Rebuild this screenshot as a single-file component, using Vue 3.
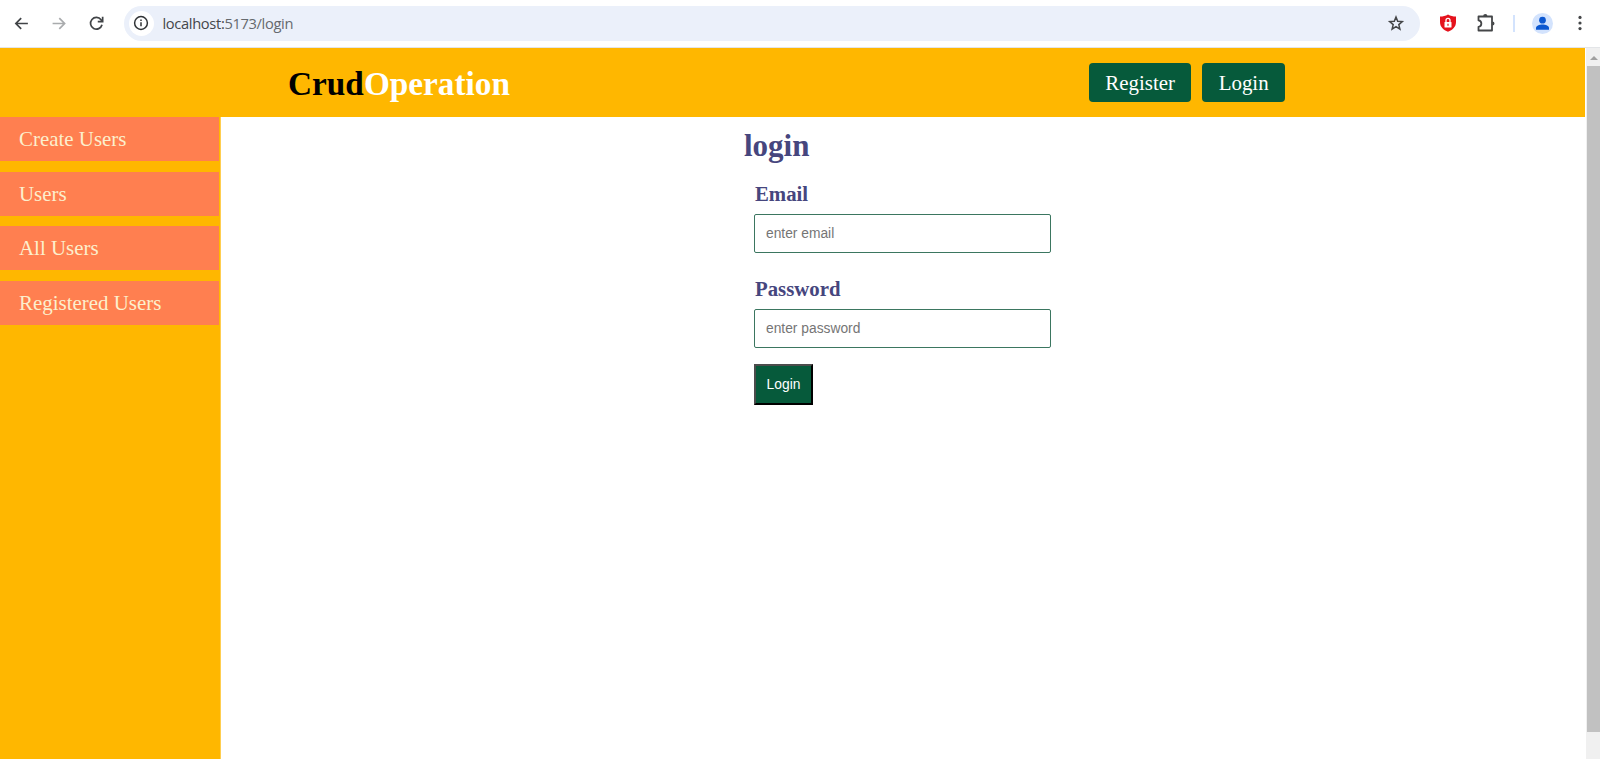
<script setup>
import { ref } from 'vue'

const links = ['Create Users', 'Users', 'All Users', 'Registered Users']
const email = ref('')
const password = ref('')
</script>

<template>
  <div class="window">
    <div class="toolbar">
      <svg class="nav" viewBox="0 0 16 16"><path d="M14 8H2.500M7.700 3L2.700 8L7.700 13" /></svg>
      <svg class="nav dim" viewBox="0 0 16 16"><path d="M1.500 8h11.500M7.800 3L12.800 8L7.800 13" /></svg>
      <svg class="nav" viewBox="0 0 16 16"><path d="M13.200 9.200A5.500 5.500 0 1 1 12.300 4.500L13.600 6M13.800 1.600V6.200H9.200" /></svg>
      <div class="address">
        <span class="info">
          <svg viewBox="0 0 16 16"><circle cx="8" cy="8" r="6.4" /><path d="M8 7.2v4M8 4.4v1.6" /></svg>
        </span>
        <span class="url"><b>localhost:</b>5173/login</span>
        <svg class="star" viewBox="0 0 18 18"><path d="M9 3l1.700 4.200 4.600.4-3.500 3 1.100 4.500L9 12.700l-3.900 2.400 1.100-4.500-3.500-3 4.600-.4z" /></svg>
      </div>
      <svg class="shield" viewBox="0 0 18 18">
        <path fill="#e5131d" d="M9 .5C6.500 2 4 2.500 1 2.500V8c0 5 3.500 8 8 9.700C13.500 16 17 13 17 8V2.500C14 2.500 11.500 2 9 .5z" />
        <rect x="5.500" y="8" width="7" height="5.500" rx=".6" fill="#fff" />
        <path d="M7 8V6.300a2 2 0 0 1 4 0V8" fill="none" stroke="#fff" stroke-width="1.300" />
        <path d="M9 9.700v2" stroke="#e5131d" stroke-width="1.200" />
      </svg>
      <svg class="puzzle" viewBox="0 0 20 20">
        <path d="M2.500 3.500h13.500v14H2.500v-3.700c3.800-.3 3.800-6.200 0-6.500z" fill="none" stroke="#444648" stroke-width="1.800" stroke-linejoin="round" />
        <path d="M7.200 3a2.100 2.100 0 0 1 4.200 0zM16.400 8.400a2.100 2.100 0 0 1 0 4.200z" fill="#444648" />
      </svg>
      <i class="divider"></i>
      <svg class="avatar" viewBox="0 0 20 20">
        <circle cx="10" cy="10" r="10" fill="#d3e3fd" />
        <circle cx="10" cy="6.800" r="3.200" fill="#0b57d0" />
        <path d="M3.800 15.900v-1.500c0-4.500 12.400-4.500 12.400 0v1.500z" fill="#0b57d0" />
      </svg>
      <svg class="dots" viewBox="0 0 4 16"><circle cx="2" cy="2.400" r="1.600" /><circle cx="2" cy="8" r="1.600" /><circle cx="2" cy="13.600" r="1.600" /></svg>
    </div>

    <div class="viewport">
      <div class="page">
        <header>
          <div class="logo">Crud<span>Operation</span></div>
          <nav>
            <a>Register</a>
            <a>Login</a>
          </nav>
        </header>
        <div class="body">
          <aside>
            <a v-for="link in links" :key="link">{{ link }}</a>
          </aside>
          <main>
            <form @submit.prevent>
              <h1>login</h1>
              <div class="fields">
                <label for="email">Email</label>
                <input id="email" v-model="email" type="email" placeholder="enter email" />
                <label for="password">Password</label>
                <input id="password" v-model="password" class="password" type="password" placeholder="enter password" />
                <button>Login</button>
              </div>
            </form>
          </main>
        </div>
      </div>
      <div class="scrollbar">
        <i class="arrow"></i>
        <i class="thumb"></i>
      </div>
    </div>
  </div>
</template>

<style>
body { overflow: hidden; }
</style>

<style scoped>
* { box-sizing: border-box; }
.window {
  display: flex;
  flex-direction: column;
  width: 1600px;
  height: 759px;
  background: #fff;
  font-family: "Liberation Serif", "Times New Roman", serif;
}
svg { display: block; flex: none; }
.toolbar {
  display: flex;
  align-items: center;
  height: 48px;
  padding: 0 0 1px 13px;
  border-bottom: 1px solid #e3e5e8;
}
.nav {
  width: 17px;
  height: 17px;
  margin-right: 20.500px;
  fill: none;
  stroke: #414447;
  stroke-width: 1.600;
}
.nav.dim { stroke: #a9abad; }
.address {
  display: flex;
  align-items: center;
  width: 1296px;
  height: 35px;
  margin-left: -2px;
  padding: 0 15px 0 5px;
  border-radius: 18px;
  background: #ebf0fa;
}
.info {
  display: grid;
  place-items: center;
  width: 25px;
  height: 25px;
  border-radius: 50%;
  background: #fff;
}
.info svg { width: 16px; height: 16px; fill: none; stroke: #303336; stroke-width: 1.500; }
.url {
  flex: 1;
  margin-left: 9px;
  color: #65696e;
  font: 14.700px "Open Sans", "Noto Sans", sans-serif;
  letter-spacing: -0.350px;
}
.url b { color: #44474b; font-weight: 400; }
.star { width: 18px; height: 18px; fill: none; stroke: #444648; stroke-width: 1.500; }
.shield { width: 18px; height: 18px; margin-left: 19px; }
.puzzle { width: 20px; height: 20px; margin-left: 19.500px; }
.divider { width: 2px; height: 17px; margin-left: 16.500px; background: #d3e3fd; }
.avatar { width: 21px; height: 21px; margin-left: 17px; }
.dots { width: 4px; height: 16px; margin-left: 25px; fill: #444648; }

.viewport { display: flex; flex: 1; min-height: 0; }
.page { display: flex; flex-direction: column; width: 1585px; }
header {
  display: flex;
  align-items: center;
  justify-content: space-between;
  height: 69px;
  padding: 0 300px 0 288px;
  background: #ffb700;
}
.logo { padding-top: 1px; font-size: 33.300px; font-weight: 700; line-height: 39px; color: #000; }
.logo span { color: #fff; }
nav { display: flex; gap: 11px; margin-bottom: 1px; }
nav a {
  height: 39px;
  padding: 0 16.400px;
  border-radius: 4px;
  background: #065a3b;
  color: #fff;
  font-size: 20.900px;
  line-height: 40px;
}
.body { display: flex; flex: 1; }
aside {
  display: flex;
  flex-direction: column;
  gap: 10.700px;
  width: 221px;
  padding-right: 1px;
  border-right: 1px solid #ffce50;
  background: #ffb700;
}
aside a {
  height: 44px;
  padding-left: 19px;
  background: #ff7f50;
  color: #fcefcd;
  font-size: 20.930px;
  line-height: 44px;
}
main { flex: 1; padding: 11px 0 0 523px; }
h1 { margin: 0; color: #46467e; font-size: 31px; line-height: 36px; }
.fields {
  display: flex;
  flex-direction: column;
  align-items: flex-start;
  padding: 18px 0 0 10px;
}
label {
  height: 32px;
  padding-left: 1px;
  color: #46467e;
  font-size: 20.800px;
  font-weight: 700;
  line-height: 23px;
}
input {
  width: 297px;
  height: 39px;
  margin-bottom: 24px;
  padding: 0 11px;
  border: 1px solid #3b7660;
  border-radius: 2px;
  outline: 0;
  background: #fff;
  font: 13.800px "Liberation Sans", Arial, sans-serif;
}
input.password { padding-bottom: 1px; }
input::placeholder { color: #757575; opacity: 1; }
button {
  width: 59px;
  height: 41px;
  margin-top: -8px;
  padding: 0 0 1px;
  border: 2px solid;
  border-color: #4c4c4c #000 #000 #4c4c4c;
  border-radius: 0;
  background: #065a3b;
  color: #fff;
  font: 13.800px "Liberation Sans", Arial, sans-serif;
}
.scrollbar { width: 15px; padding: 8px 0 0 1px; border-left: 1px solid #fff; background: #f0f0f0; }
.arrow {
  display: block;
  width: 0;
  margin: 0 auto;
  border: 4px solid transparent;
  border-top: 0;
  border-bottom-color: #a0a0a0;
}
.thumb { display: block; height: 666px; margin-top: 6px; background: #c1c1c1; }
</style>
